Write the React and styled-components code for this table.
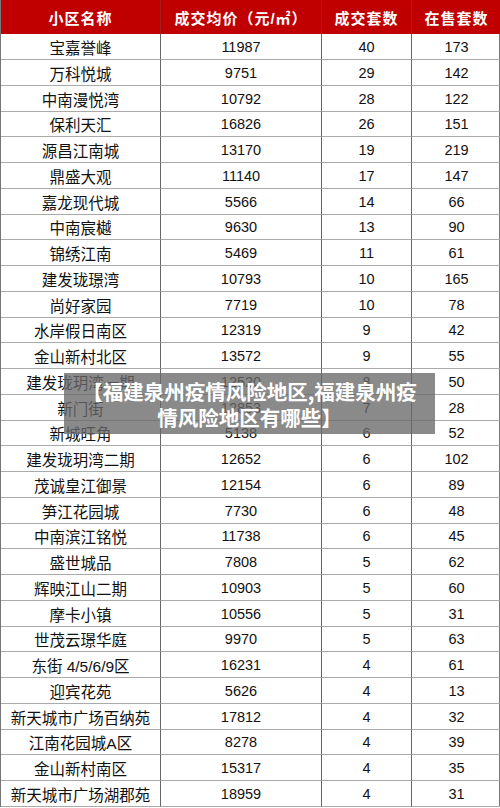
import React from "react";
import styled, { createGlobalStyle } from "styled-components";

const Global = createGlobalStyle`
  html, body { margin: 0; padding: 0; background: #fff; }
  body { font-family: "Liberation Sans", "Noto Sans CJK SC", sans-serif; }
`;

const rows = [
  ["宝嘉誉峰", "11987", "40", "173"],
  ["万科悦城", "9751", "29", "142"],
  ["中南漫悦湾", "10792", "28", "122"],
  ["保利天汇", "16826", "26", "151"],
  ["源昌江南城", "13170", "19", "219"],
  ["鼎盛大观", "11140", "17", "147"],
  ["嘉龙现代城", "5566", "14", "66"],
  ["中南宸樾", "9630", "13", "90"],
  ["锦绣江南", "5469", "11", "61"],
  ["建发珑璟湾", "10793", "10", "165"],
  ["尚好家园", "7719", "10", "78"],
  ["水岸假日南区", "12319", "9", "42"],
  ["金山新村北区", "13572", "9", "55"],
  ["建发珑玥湾一期", "12520", "8", "50"],
  ["新门街", "12853", "7", "28"],
  ["新城旺角", "5138", "6", "52"],
  ["建发珑玥湾二期", "12652", "6", "102"],
  ["茂诚皇江御景", "12154", "6", "89"],
  ["笋江花园城", "7730", "6", "48"],
  ["中南滨江铭悦", "11738", "6", "45"],
  ["盛世城品", "7808", "5", "62"],
  ["辉映江山二期", "10903", "5", "60"],
  ["摩卡小镇", "10556", "5", "31"],
  ["世茂云璟华庭", "9970", "5", "63"],
  ["东街 4/5/6/9区", "16231", "4", "61"],
  ["迎宾花苑", "5626", "4", "13"],
  ["新天城市广场百纳苑", "17812", "4", "32"],
  ["江南花园城A区", "8278", "4", "39"],
  ["金山新村南区", "15317", "4", "35"],
  ["新天城市广场湖郡苑", "18959", "4", "31"],
];

const Page = styled.div`
  position: relative;
  width: 500px;
  height: 808px;
  overflow: hidden;
`;

const Table = styled.div`
  display: grid;
  grid-template-columns: 159px 161px 90px 90px;
  border-left: 1px solid #777;
  border-right: 1px solid #777;
  box-sizing: border-box;
  width: 500px;
`;

const Head = styled.div`
  height: 34px;
  background: #c00000;
  color: #fff;
  font-weight: bold;
  font-size: 15px;
  letter-spacing: 1px;
  display: flex;
  align-items: center;
  justify-content: center;
  border-left: ${(p) => (p.$first ? "none" : "1px solid #a02020")};
`;

const Cell = styled.div`
  height: 25.75px;
  box-sizing: border-box;
  border-bottom: 1px solid #aaa;
  border-left: ${(p) => (p.$first ? "none" : "1px solid #666")};
  display: flex;
  align-items: center;
  justify-content: center;
  font-size: ${(p) => (p.$name ? "15.5px" : "14.5px")};
  color: #111;
  padding-top: 1px;
  white-space: nowrap;
`;

const FirstCell = styled(Cell)`
  height: 26px;
`;

const Banner = styled.div`
  position: absolute;
  left: 64px;
  top: 373px;
  width: 371px;
  height: 61px;
  background: rgba(105, 105, 105, 0.78);
  color: #fff;
  font-weight: bold;
  font-size: 20.5px;
  line-height: 26px;
  text-align: center;
  display: flex;
  flex-direction: column;
  justify-content: center;
  font-family: "Noto Sans CJK SC", sans-serif;
  white-space: nowrap;
`;

export default function App() {
  return (
    <Page>
      <Global />
      <Table>
        <Head $first>小区名称</Head>
        <Head>成交均价（元/㎡）</Head>
        <Head>成交套数</Head>
        <Head>在售套数</Head>
        {rows.map((r, i) =>
          r.map((v, j) => {
            const C = i === 0 ? FirstCell : Cell;
            return (
              <C key={i + "-" + j} $first={j === 0} $name={j === 0}>
                {v}
              </C>
            );
          })
        )}
      </Table>
      <Banner>
        <span>【福建泉州疫情风险地区,福建泉州疫</span>
        <span>情风险地区有哪些】</span>
      </Banner>
    </Page>
  );
}
